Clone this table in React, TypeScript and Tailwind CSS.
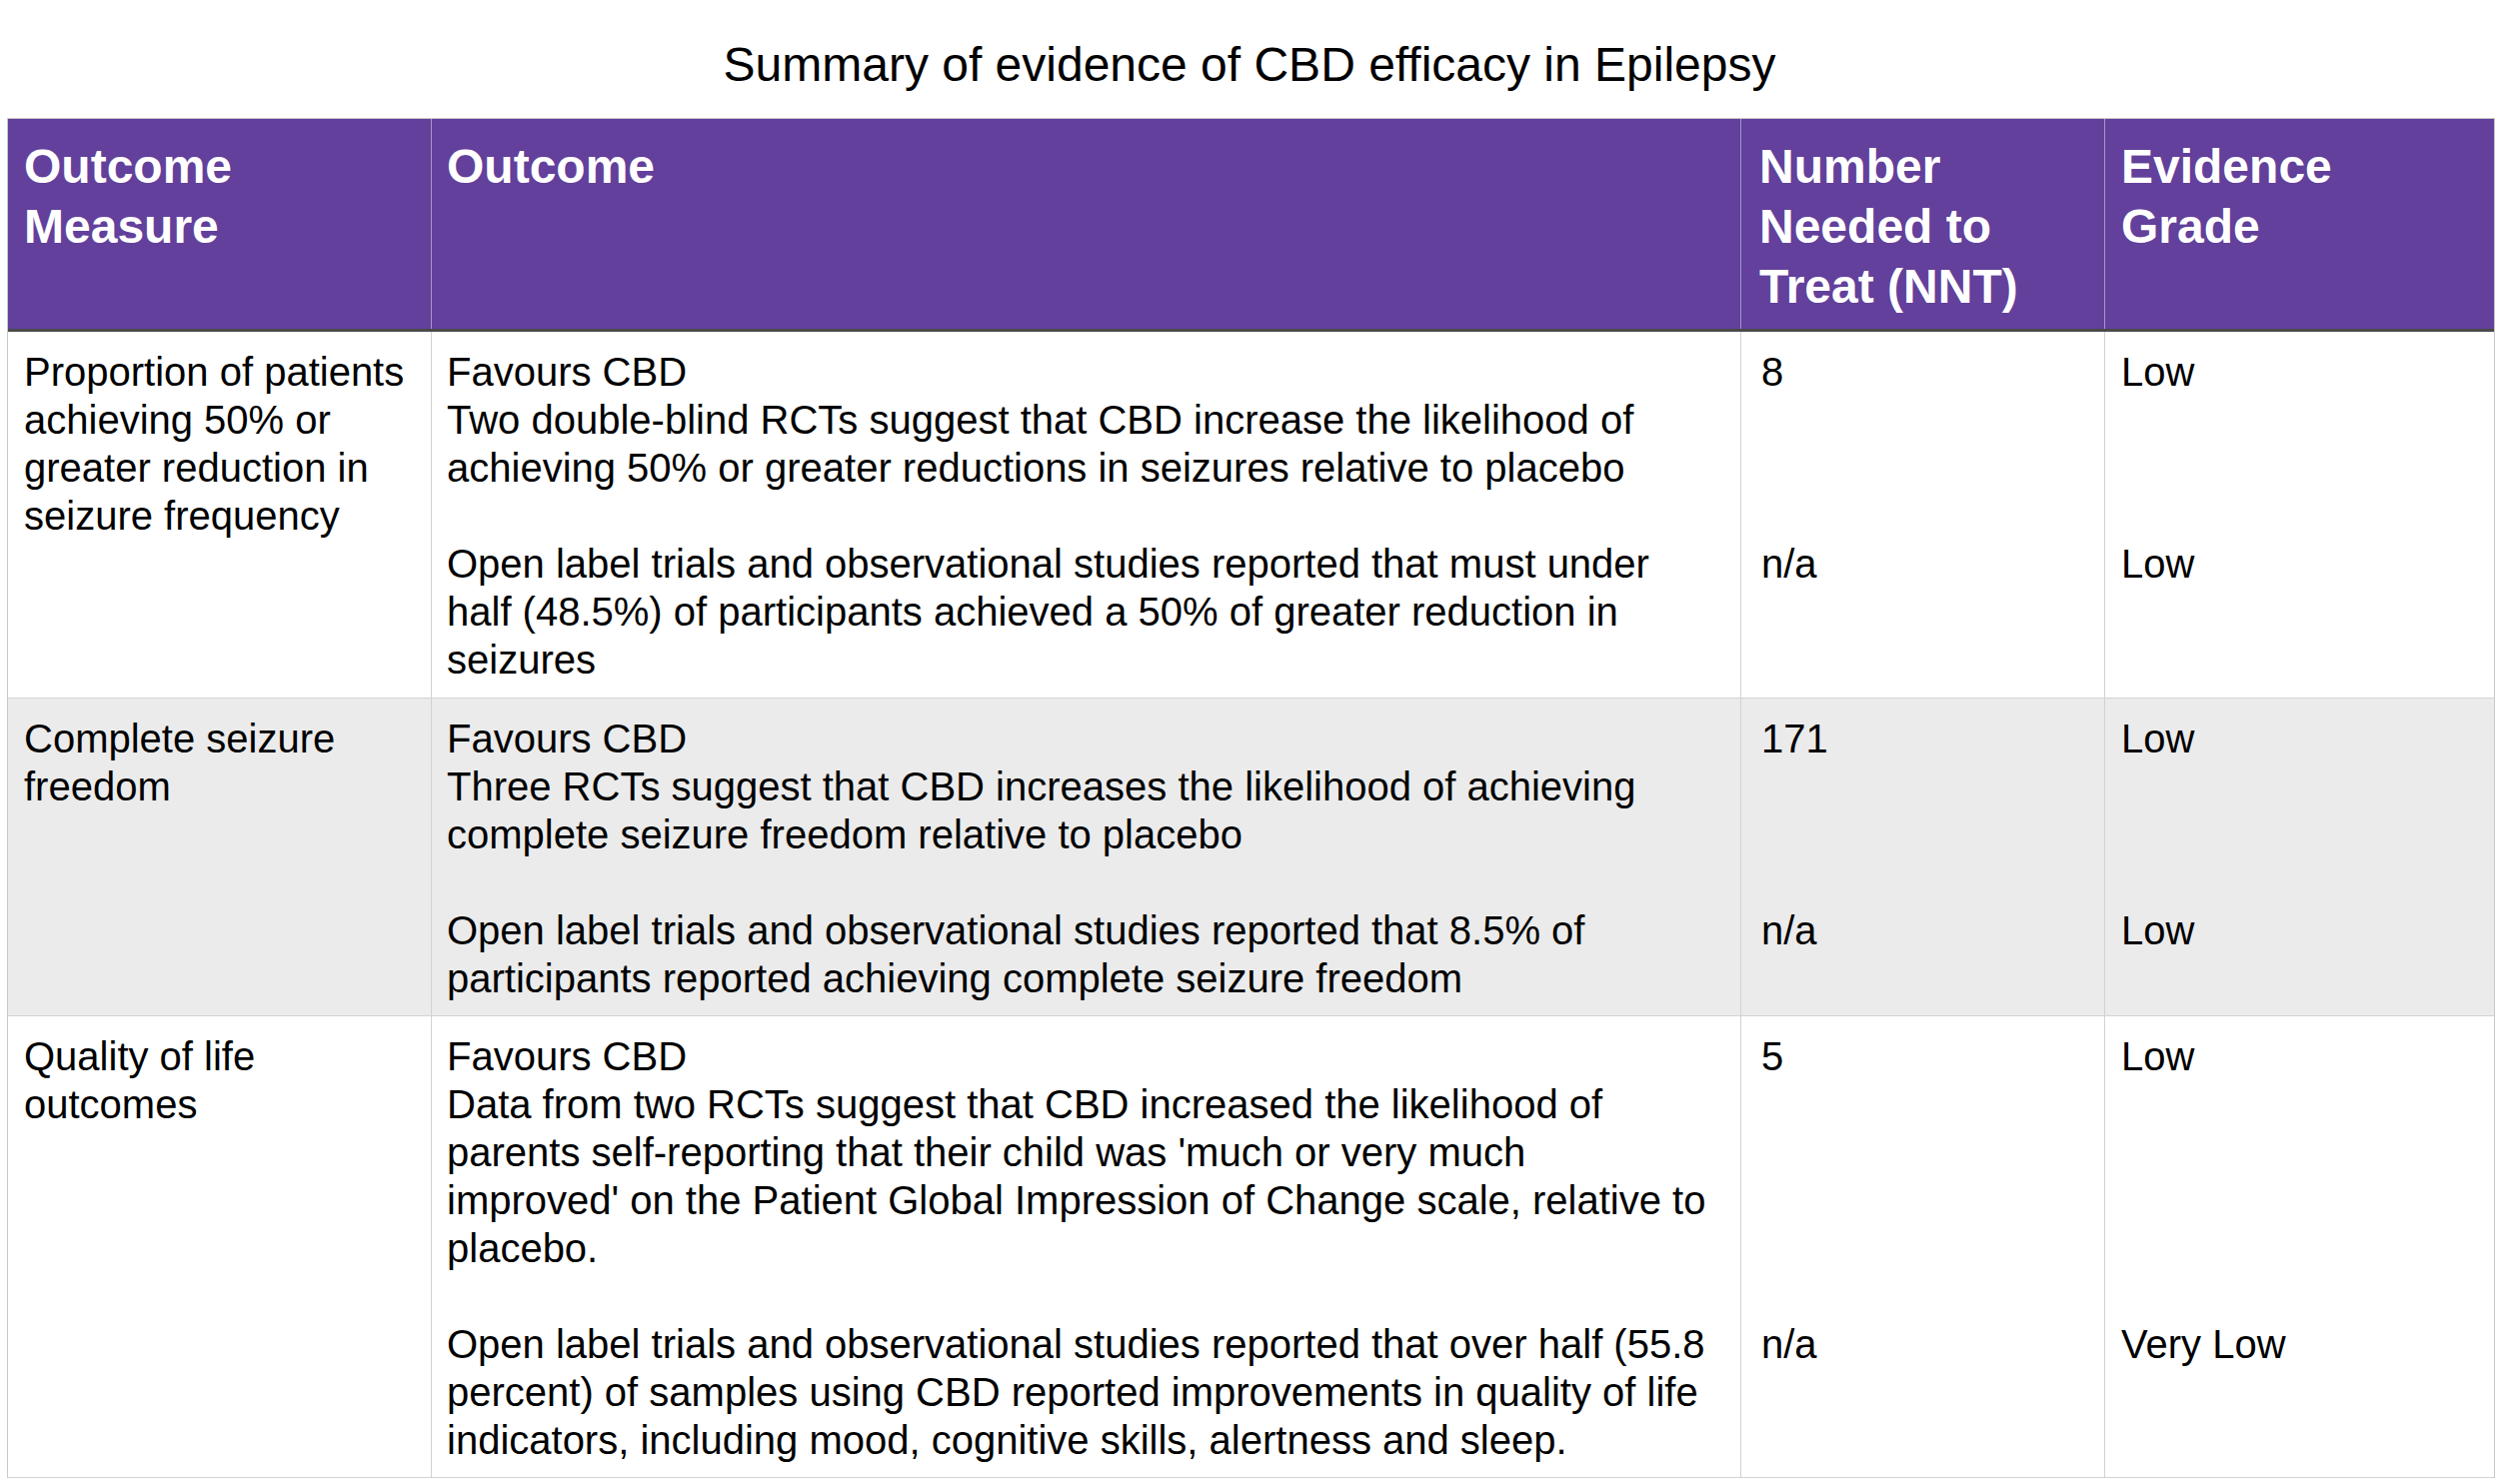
type Entry = {
  lines: string[];
  nnt: string;
  grade: string;
};

type Row = {
  measure: string[];
  entries: Entry[];
  shaded?: boolean;
};

const rows: Row[] = [
  {
    measure: ['Proportion of patients', 'achieving 50% or', 'greater reduction in', 'seizure frequency'],
    entries: [
      {
        lines: [
          'Favours CBD',
          'Two double-blind RCTs suggest that CBD increase the likelihood of',
          'achieving 50% or greater reductions in seizures relative to placebo',
        ],
        nnt: '8',
        grade: 'Low',
      },
      {
        lines: [
          'Open label trials and observational studies reported that must under',
          'half (48.5%) of participants achieved a 50% of greater reduction in',
          'seizures',
        ],
        nnt: 'n/a',
        grade: 'Low',
      },
    ],
  },
  {
    measure: ['Complete seizure', 'freedom'],
    shaded: true,
    entries: [
      {
        lines: [
          'Favours CBD',
          'Three RCTs suggest that CBD increases the likelihood of achieving',
          'complete seizure freedom relative to placebo',
        ],
        nnt: '171',
        grade: 'Low',
      },
      {
        lines: [
          'Open label trials and observational studies reported that 8.5% of',
          'participants reported achieving complete seizure freedom',
        ],
        nnt: 'n/a',
        grade: 'Low',
      },
    ],
  },
  {
    measure: ['Quality of life', 'outcomes'],
    entries: [
      {
        lines: [
          'Favours CBD',
          'Data from two RCTs suggest that CBD increased the likelihood of',
          "parents self-reporting that their child was 'much or very much",
          "improved' on the Patient Global Impression of Change scale, relative to",
          'placebo.',
        ],
        nnt: '5',
        grade: 'Low',
      },
      {
        lines: [
          'Open label trials and observational studies reported that over half (55.8',
          'percent) of samples using CBD reported improvements in quality of life',
          'indicators, including mood, cognitive skills, alertness and sleep.',
        ],
        nnt: 'n/a',
        grade: 'Very Low',
      },
    ],
  },
];

function Lines({ lines }: { lines: string[] }) {
  return (
    <>
      {lines.map((l, i) => (
        <div key={i} className="whitespace-nowrap">
          {l}
        </div>
      ))}
    </>
  );
}

export default function App() {
  return (
    <div className="min-h-screen bg-white text-black font-['Liberation_Sans',Arial,sans-serif]">
      <h1 className="pt-[37px] pb-[25px] text-center text-[48px] leading-[56px] font-normal">
        Summary of evidence of CBD efficacy in Epilepsy
      </h1>

      <div className="ml-[7px] w-[2489px] border-x border-t border-[#c9c9c9]">
        {/* Header */}
        <div className="flex bg-[#62409b] border-b-[3px] border-[#4a4a4a] text-white font-bold text-[48px] leading-[60px]">
          <div className="w-[423px] pl-[16px] pt-[18px] pb-[12px]">
            <Lines lines={['Outcome', 'Measure']} />
          </div>
          <div className="w-[1310px] border-l border-[#a797c6] pl-[15px] pt-[18px] pb-[12px]">
            <Lines lines={['Outcome']} />
          </div>
          <div className="w-[364px] border-l border-[#a797c6] pl-[18px] pt-[18px] pb-[12px]">
            <Lines lines={['Number', 'Needed to', 'Treat (NNT)']} />
          </div>
          <div className="w-[390px] border-l border-[#a797c6] pl-[16px] pt-[18px] pb-[12px]">
            <Lines lines={['Evidence', 'Grade']} />
          </div>
        </div>

        {/* Body */}
        {rows.map((row, ri) => (
          <div
            key={ri}
            className={`flex text-[40px] leading-[48px] border-b border-[#d2d2d2] ${
              row.shaded ? 'bg-[#ebebeb]' : 'bg-white'
            }`}
          >
            <div className="w-[423px] pl-[16px] pt-[16px]">
              <Lines lines={row.measure} />
            </div>
            <div className="flex flex-col">
              {row.entries.map((e, ei) => {
                const isFirst = ei === 0;
                const isLast = ei === row.entries.length - 1;
                const pad = `${isFirst ? 'pt-[16px]' : ''} ${
                  isLast ? (ri === 0 ? 'pb-[14px]' : 'pb-[13px]') : 'pb-[48px]'
                }`;
                return (
                  <div key={ei} className="flex">
                    <div className={`w-[1310px] border-l border-[#d2d2d2] pl-[15px] ${pad}`}>
                      <Lines lines={e.lines} />
                    </div>
                    <div className={`w-[364px] border-l border-[#d2d2d2] pl-[20px] ${pad}`}>
                      {e.nnt}
                    </div>
                    <div className={`w-[390px] border-l border-[#d2d2d2] pl-[16px] ${pad}`}>
                      {e.grade}
                    </div>
                  </div>
                );
              })}
            </div>
          </div>
        ))}
      </div>
    </div>
  );
}
